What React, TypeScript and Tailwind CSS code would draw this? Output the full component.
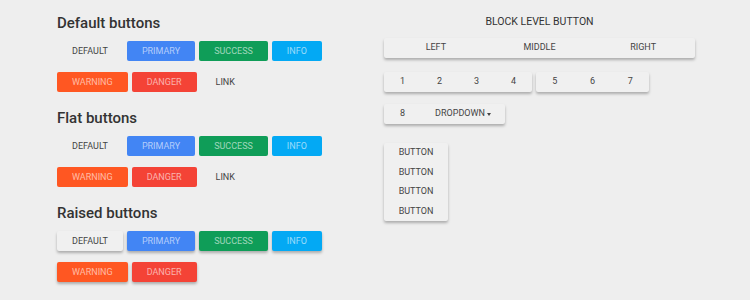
import React from 'react'

type Variant = 'default' | 'primary' | 'success' | 'info' | 'warning' | 'danger' | 'link'

const colors: Record<Variant, string> = {
  default: 'text-[#444]',
  primary: 'bg-[#4285f4] text-white/60',
  success: 'bg-[#0f9d58] text-white/60',
  info: 'bg-[#03a9f4] text-white/60',
  warning: 'bg-[#ff5722] text-white/60',
  danger: 'bg-[#f44336] text-white/60',
  link: 'text-[#444]',
}

function Btn({ variant, raised, children }: { variant: Variant; raised?: boolean; children: React.ReactNode }) {
  const shadow = raised ? 'shadow-[0_2px_3px_rgba(0,0,0,0.28)]' : ''
  const bg = raised && variant === 'default' ? 'bg-[#f0f0f0]' : ''
  return (
    <button className={`h-5 px-[15px] rounded-[2px] text-[9px] leading-none uppercase flex items-center ${colors[variant]} ${shadow} ${bg}`}>
      {children}
    </button>
  )
}

function Section({ title, raised }: { title: string; raised?: boolean }) {
  return (
    <div>
      <h2 className="text-[15px] leading-[18px] font-medium text-[#333] mb-[9px]">{title}</h2>
      <div className="flex flex-col gap-[11px]">
        <div className="flex gap-1">
          <Btn variant="default" raised={raised}>Default</Btn>
          <Btn variant="primary" raised={raised}>Primary</Btn>
          <Btn variant="success" raised={raised}>Success</Btn>
          <Btn variant="info" raised={raised}>Info</Btn>
        </div>
        <div className="flex gap-1">
          <Btn variant="warning" raised={raised}>Warning</Btn>
          <Btn variant="danger" raised={raised}>Danger</Btn>
          {!raised && <Btn variant="link">Link</Btn>}
        </div>
      </div>
    </div>
  )
}

const card = 'bg-[#f0f0f0] rounded-[2px] shadow-[0_2px_3px_rgba(0,0,0,0.28)] text-[9px] text-[#444] uppercase'

export default function App() {
  return (
    <div className="w-[750px] h-[300px] bg-[#eeeeee] overflow-hidden" style={{ fontFamily: 'Roboto, "Liberation Sans", sans-serif' }}>
      <div className="flex pl-[57px] pt-[14px]">
        <div className="w-[327px] flex flex-col gap-[17px]">
          <Section title="Default buttons" />
          <Section title="Flat buttons" />
          <Section title="Raised buttons" raised />
        </div>

        <div className="w-[311px] flex flex-col">
          <div className="text-center text-[10.5px] leading-3 text-[#333] uppercase mt-[2px] mb-[10px]">Block level button</div>
          <div className={`${card} h-5 grid grid-cols-3 items-center text-center`}>
            <span>Left</span>
            <span>Middle</span>
            <span>Right</span>
          </div>

          <div className="flex gap-1 mt-[14px]">
            <div className={`${card} h-5 flex`}>
              {['1', '2', '3', '4'].map((n) => (
                <span key={n} className="w-[37px] flex items-center justify-center">{n}</span>
              ))}
            </div>
            <div className={`${card} h-5 flex`}>
              {['5', '6', '7'].map((n) => (
                <span key={n} className="w-[37.7px] flex items-center justify-center">{n}</span>
              ))}
            </div>
          </div>

          <div className="flex mt-3">
            <div className={`${card} h-5 flex`}>
              <span className="w-[37px] flex items-center justify-center">8</span>
              <span className="w-[84px] flex items-center justify-center gap-[2px]">
                Dropdown
                <span className="w-0 h-0 border-x-[2.5px] border-x-transparent border-t-[3px] border-t-[#444]" />
              </span>
            </div>
          </div>

          <div className="flex mt-[19px]">
            <div className={`${card} w-16 flex flex-col`}>
              {[0, 1, 2, 3].map((i) => (
                <span key={i} className="h-[19.5px] flex items-center justify-center">Button</span>
              ))}
            </div>
          </div>
        </div>
      </div>
    </div>
  )
}
